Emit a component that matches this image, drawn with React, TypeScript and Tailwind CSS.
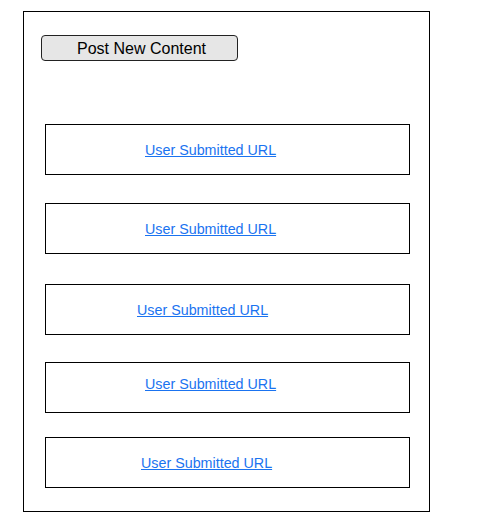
const links = [
  { pad: "pl-[99px] pt-[2px]", mt: "mt-[63px]" },
  { pad: "pl-[99px] pt-[2px]", mt: "mt-[28px]" },
  { pad: "pl-[91px] pt-[2px]", mt: "mt-[30px]" },
  { pad: "pl-[99px] pb-[5px]", mt: "mt-[27px]" },
  { pad: "pl-[95px] pt-[3px]", mt: "mt-[24px]" },
];

export default function App() {
  return (
    <div className="min-h-[521px] bg-white pt-[11px] pl-[23px] font-['Liberation_Sans',Arial,sans-serif]">
      <div className="flex h-[501px] w-[407px] flex-col border border-black">
        <button className="ml-[17px] mt-[23px] flex h-[26px] w-[197px] items-center justify-center rounded-[4px] border border-[#222] bg-[#e6e6e6] pl-[4px] pt-[2px] text-[16px] text-black">
          Post New Content
        </button>
        {links.map((l, i) => (
          <div
            key={i}
            className={`ml-[21px] flex h-[51px] w-[365px] items-center border border-black ${l.pad} ${l.mt}`}
          >
            <a href="#" className="text-[14.3px] text-[#1a73f0] underline">
              User Submitted URL
            </a>
          </div>
        ))}
      </div>
    </div>
  );
}
